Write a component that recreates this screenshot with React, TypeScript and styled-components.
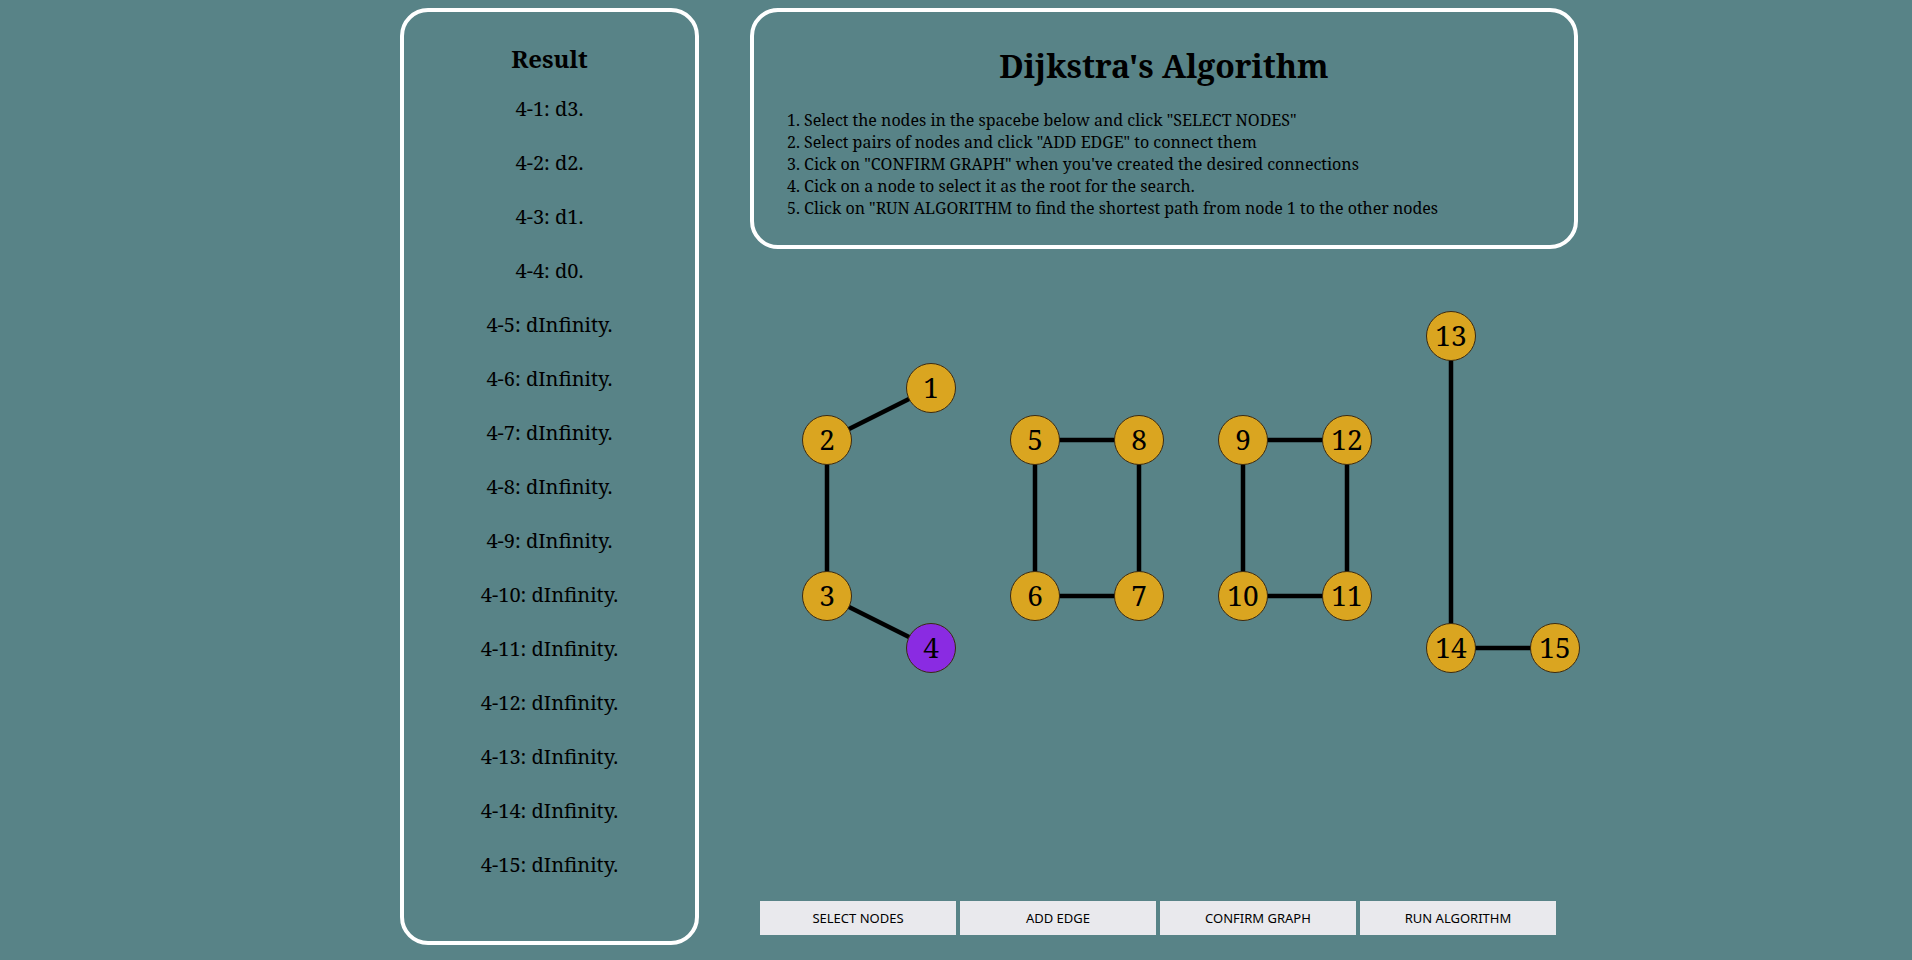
import React from 'react';
import styled, { createGlobalStyle } from 'styled-components';

const GlobalStyle = createGlobalStyle`
  body {
    margin: 0;
    background-color: #588387;
    font-family: "Noto Serif", serif;
    color: #000;
  }
`;

const Page = styled.main`
  display: flex;
  align-items: flex-start;
  gap: 51px;
  padding: 8px 0 0 400px;
  min-height: 952px;
`;

const ResultPanel = styled.section`
  box-sizing: border-box;
  width: 299px;
  height: 937px;
  border: 4px solid #fff;
  border-radius: 28px;
  padding-top: 30px;
  display: flex;
  flex-direction: column;
  align-items: center;
`;

const ResultTitle = styled.h2`
  margin: 0 0 20px;
  font-size: 24px;
  font-weight: 700;
`;

const ResultList = styled.ul`
  list-style: none;
  margin: 0;
  padding: 0;
  display: flex;
  flex-direction: column;
  align-items: center;
  gap: 27px;
`;

const ResultItem = styled.li`
  font-size: 20px;
  line-height: 27px;
`;

const MainColumn = styled.section`
  width: 828px;
  display: flex;
  flex-direction: column;
`;

const Header = styled.header`
  box-sizing: border-box;
  height: 241px;
  border: 4px solid #fff;
  border-radius: 28px;
  padding: 32px 33px 0;
`;

const Title = styled.h1`
  margin: 0 0 22px;
  text-align: center;
  font-size: 32px;
  font-weight: 700;
`;

const Steps = styled.div`
  font-size: 16px;

  p {
    margin: 0;
  }
`;

const Canvas = styled.div`
  height: 652px;
`;

const GraphSvg = styled.svg`
  display: block;
  overflow: visible;
`;

const ButtonRow = styled.div`
  display: flex;
  gap: 4px;
  padding-left: 10px;
`;

const ActionButton = styled.button`
  width: 196px;
  height: 34px;
  border: none;
  border-radius: 0;
  background: #e9e9ed;
  color: #000;
  font-family: "Noto Sans", "Open Sans", sans-serif;
  font-size: 13px;
  cursor: pointer;
`;

type Node = { id: number; x: number; y: number; root?: boolean };

const cols = [77, 181, 285, 389, 493, 597, 701, 805];

const nodes: Node[] = [
  { id: 1, x: cols[1], y: 139 },
  { id: 2, x: cols[0], y: 191 },
  { id: 3, x: cols[0], y: 347 },
  { id: 4, x: cols[1], y: 399, root: true },
  { id: 5, x: cols[2], y: 191 },
  { id: 6, x: cols[2], y: 347 },
  { id: 7, x: cols[3], y: 347 },
  { id: 8, x: cols[3], y: 191 },
  { id: 9, x: cols[4], y: 191 },
  { id: 10, x: cols[4], y: 347 },
  { id: 11, x: cols[5], y: 347 },
  { id: 12, x: cols[5], y: 191 },
  { id: 13, x: cols[6], y: 87 },
  { id: 14, x: cols[6], y: 399 },
  { id: 15, x: cols[7], y: 399 },
];

const edges: [number, number][] = [
  [1, 2], [2, 3], [3, 4],
  [5, 8], [5, 6], [6, 7], [8, 7],
  [9, 12], [9, 10], [10, 11], [12, 11],
  [13, 14], [14, 15],
];

const distances: Record<number, string> = { 1: '3', 2: '2', 3: '1', 4: '0' };

const steps = [
  '1. Select the nodes in the spacebe below and click "SELECT NODES"',
  '2. Select pairs of nodes and click "ADD EDGE" to connect them',
  '3. Cick on "CONFIRM GRAPH" when you\'ve created the desired connections',
  '4. Cick on a node to select it as the root for the search.',
  '5. Click on "RUN ALGORITHM to find the shortest path from node 1 to the other nodes',
];

const byId = (id: number) => nodes.find((n) => n.id === id)!;

export default function App() {
  return (
    <>
      <GlobalStyle />
      <Page>
        <ResultPanel>
          <ResultTitle>Result</ResultTitle>
          <ResultList>
            {nodes
              .map((n) => n.id)
              .sort((a, b) => a - b)
              .map((id) => (
                <ResultItem key={id}>
                  4-{id}: d{distances[id] ?? 'Infinity'}.
                </ResultItem>
              ))}
          </ResultList>
        </ResultPanel>

        <MainColumn>
          <Header>
            <Title>Dijkstra's Algorithm</Title>
            <Steps>
              {steps.map((s) => (
                <p key={s}>{s}</p>
              ))}
            </Steps>
          </Header>

          <Canvas>
            <GraphSvg width="828" height="652">
              {edges.map(([a, b]) => {
                const na = byId(a);
                const nb = byId(b);
                return (
                  <line
                    key={`${a}-${b}`}
                    x1={na.x}
                    y1={na.y}
                    x2={nb.x}
                    y2={nb.y}
                    stroke="#000"
                    strokeWidth={4.5}
                  />
                );
              })}
              {nodes.map((n) => (
                <g key={n.id}>
                  <circle
                    cx={n.x}
                    cy={n.y}
                    r={24.5}
                    fill={n.root ? '#8a2be2' : '#daa520'}
                    stroke="#3b2a12"
                    strokeWidth={1}
                  />
                  <text
                    x={n.x}
                    y={n.y + 10}
                    textAnchor="middle"
                    fontSize="28"
                    fontFamily='"Noto Serif", serif'
                    fill="#000"
                  >
                    {n.id}
                  </text>
                </g>
              ))}
            </GraphSvg>
          </Canvas>

          <ButtonRow>
            <ActionButton>SELECT NODES</ActionButton>
            <ActionButton>ADD EDGE</ActionButton>
            <ActionButton>CONFIRM GRAPH</ActionButton>
            <ActionButton>RUN ALGORITHM</ActionButton>
          </ButtonRow>
        </MainColumn>
      </Page>
    </>
  );
}
